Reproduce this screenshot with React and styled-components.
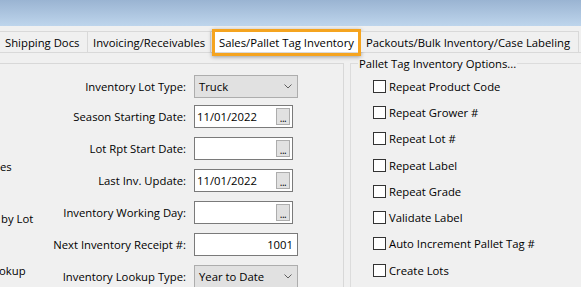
import React from "react";
import styled, { createGlobalStyle } from "styled-components";

const GlobalStyle = createGlobalStyle`
  html, body {
    margin: 0;
    padding: 0;
    background: #f0f0f0;
  }
  body {
    font-family: "Open Sans", "Noto Sans", sans-serif;
    font-size: 11.3px;
    color: #000;
  }
`;

const Window = styled.div`
  width: 581px;
  height: 287px;
  overflow: hidden;
  background: #f0f0f0;
  display: flex;
  flex-direction: column;
`;

const CaptionBand = styled.div`
  flex: none;
  height: 26px;
  background: linear-gradient(to bottom, #9ab4d2, #bed5ec);
`;

const TabStrip = styled.div`
  flex: none;
  display: flex;
  height: 21px;
  margin-top: 5px;
  border-bottom: 1px solid #d9d9d9;
`;

const Tab = styled.div`
  position: relative;
  box-sizing: border-box;
  width: ${(props) => props.width}px;
  padding-left: ${(props) => (props.active ? 8 : 5)}px;
  display: flex;
  align-items: center;
  white-space: nowrap;
  border-top: 1px solid #d9d9d9;
  border-right: 1px solid #d9d9d9;
  background: ${(props) => (props.active ? "#fff" : "#f0f0f0")};

  ${(props) =>
    props.active &&
    `
    &::after {
      content: "";
      position: absolute;
      left: 1px;
      right: -1px;
      top: -3px;
      bottom: -4px;
      border: 3px solid #f5a41f;
      box-shadow: 0 1px 4px rgba(0, 0, 0, 0.35);
      pointer-events: none;
    }
  `}
`;

const Body = styled.div`
  flex: 1;
  display: flex;
  margin-top: 3px;
  min-height: 0;
`;

const LeftPanel = styled.div`
  flex: none;
  display: flex;
  width: 344px;
  box-sizing: border-box;
  margin-top: 7px;
  border-top: 1px solid #d8d8d8;
  border-right: 1px solid #d8d8d8;
`;

const FragmentCol = styled.div`
  flex: none;
  width: 40px;
  overflow: hidden;
  display: flex;
  flex-direction: column;
  gap: 36px;
  padding-top: 95px;
  line-height: 16px;
  white-space: nowrap;
`;

const Fragment = styled.span`
  margin-left: ${(props) => props.shift || 0}px;
`;

const FormGrid = styled.div`
  display: grid;
  grid-template-columns: 146px 104px;
  grid-template-rows: 30px 31px repeat(5, 32px);
  column-gap: 8px;
  padding-top: 7px;
  align-items: center;
`;

const Label = styled.div`
  text-align: right;
  white-space: nowrap;
`;

const Combo = styled.div`
  box-sizing: border-box;
  width: 104px;
  height: 23px;
  display: flex;
  align-items: center;
  justify-content: space-between;
  padding: 0 5px 0 4px;
  background: #e1e1e1;
  border: 1px solid #adadad;
`;

const TextBox = styled.div`
  box-sizing: border-box;
  width: ${(props) => props.width || 99}px;
  height: 23px;
  display: flex;
  align-items: center;
  justify-content: ${(props) => (props.right ? "flex-end" : "space-between")};
  padding: ${(props) => (props.right ? "0 4px 0 0" : "0 2px 0 2px")};
  background: #fff;
  border: 1px solid #7a7a7a;
`;

const DotsButton = styled.div`
  box-sizing: border-box;
  width: 14px;
  height: 17px;
  display: flex;
  align-items: flex-end;
  justify-content: center;
  background: #e1e1e1;
  border: 1px solid #adadad;
  font-size: 10px;
  line-height: 12px;
  letter-spacing: -0.5px;
`;

const GroupBox = styled.fieldset`
  flex: 1;
  margin: 0 0 0 6px;
  padding: 2px 0 0 0;
  border: 1px solid #dcdcdc;
  border-right: none;
  border-bottom: none;
  min-width: 0;
`;

const Legend = styled.legend`
  margin-left: 7px;
  padding: 0 1px;
  line-height: 15px;
`;

const CheckList = styled.div`
  padding-left: 22px;
`;

const CheckRow = styled.label`
  display: flex;
  align-items: center;
  gap: 3px;
  height: 26.3px;
  white-space: nowrap;
`;

const Box = styled.span`
  flex: none;
  box-sizing: border-box;
  width: 13px;
  height: 13px;
  background: #fff;
  border: 1px solid #333;
`;

const Chevron = () => (
  <svg width="8" height="5" viewBox="0 0 8 5">
    <polyline points="0.5,0.5 4,4 7.5,0.5" fill="none" stroke="#606060" strokeWidth="1" />
  </svg>
);

const DateField = ({ value }) => (
  <TextBox>
    <span>{value}</span>
    <DotsButton>...</DotsButton>
  </TextBox>
);

const tabs = [
  { label: "Shipping Docs", width: 88 },
  { label: "Invoicing/Receivables", width: 123 },
  { label: "Sales/Pallet Tag Inventory", width: 150, active: true },
  { label: "Packouts/Bulk Inventory/Case Labeling", width: 218 },
];

const options = [
  "Repeat Product Code",
  "Repeat Grower #",
  "Repeat Lot #",
  "Repeat Label",
  "Repeat Grade",
  "Validate Label",
  "Auto Increment Pallet Tag #",
  "Create Lots",
];

export default function App() {
  return (
    <Window>
      <GlobalStyle />
      <CaptionBand />
      <TabStrip>
        {tabs.map((t) => (
          <Tab key={t.label} width={t.width} active={t.active}>
            {t.label}
          </Tab>
        ))}
      </TabStrip>
      <Body>
        <LeftPanel>
          <FragmentCol>
            <Fragment>es</Fragment>
            <Fragment shift={1}>by Lot</Fragment>
            <Fragment shift={-1}>okup</Fragment>
          </FragmentCol>
          <FormGrid>
            <Label>Inventory Lot Type:</Label>
            <Combo>
              <span>Truck</span>
              <Chevron />
            </Combo>
            <Label>Season Starting Date:</Label>
            <DateField value="11/01/2022" />
            <Label>Lot Rpt Start Date:</Label>
            <DateField value="" />
            <Label>Last Inv. Update:</Label>
            <DateField value="11/01/2022" />
            <Label>Inventory Working Day:</Label>
            <DateField value="" />
            <Label>Next Inventory Receipt #:</Label>
            <TextBox width={104} right>
              1001
            </TextBox>
            <Label>Inventory Lookup Type:</Label>
            <Combo>
              <span>Year to Date</span>
              <Chevron />
            </Combo>
          </FormGrid>
        </LeftPanel>
        <GroupBox>
          <Legend>Pallet Tag Inventory Options...</Legend>
          <CheckList>
            {options.map((o) => (
              <CheckRow key={o}>
                <Box />
                {o}
              </CheckRow>
            ))}
          </CheckList>
        </GroupBox>
      </Body>
    </Window>
  );
}
